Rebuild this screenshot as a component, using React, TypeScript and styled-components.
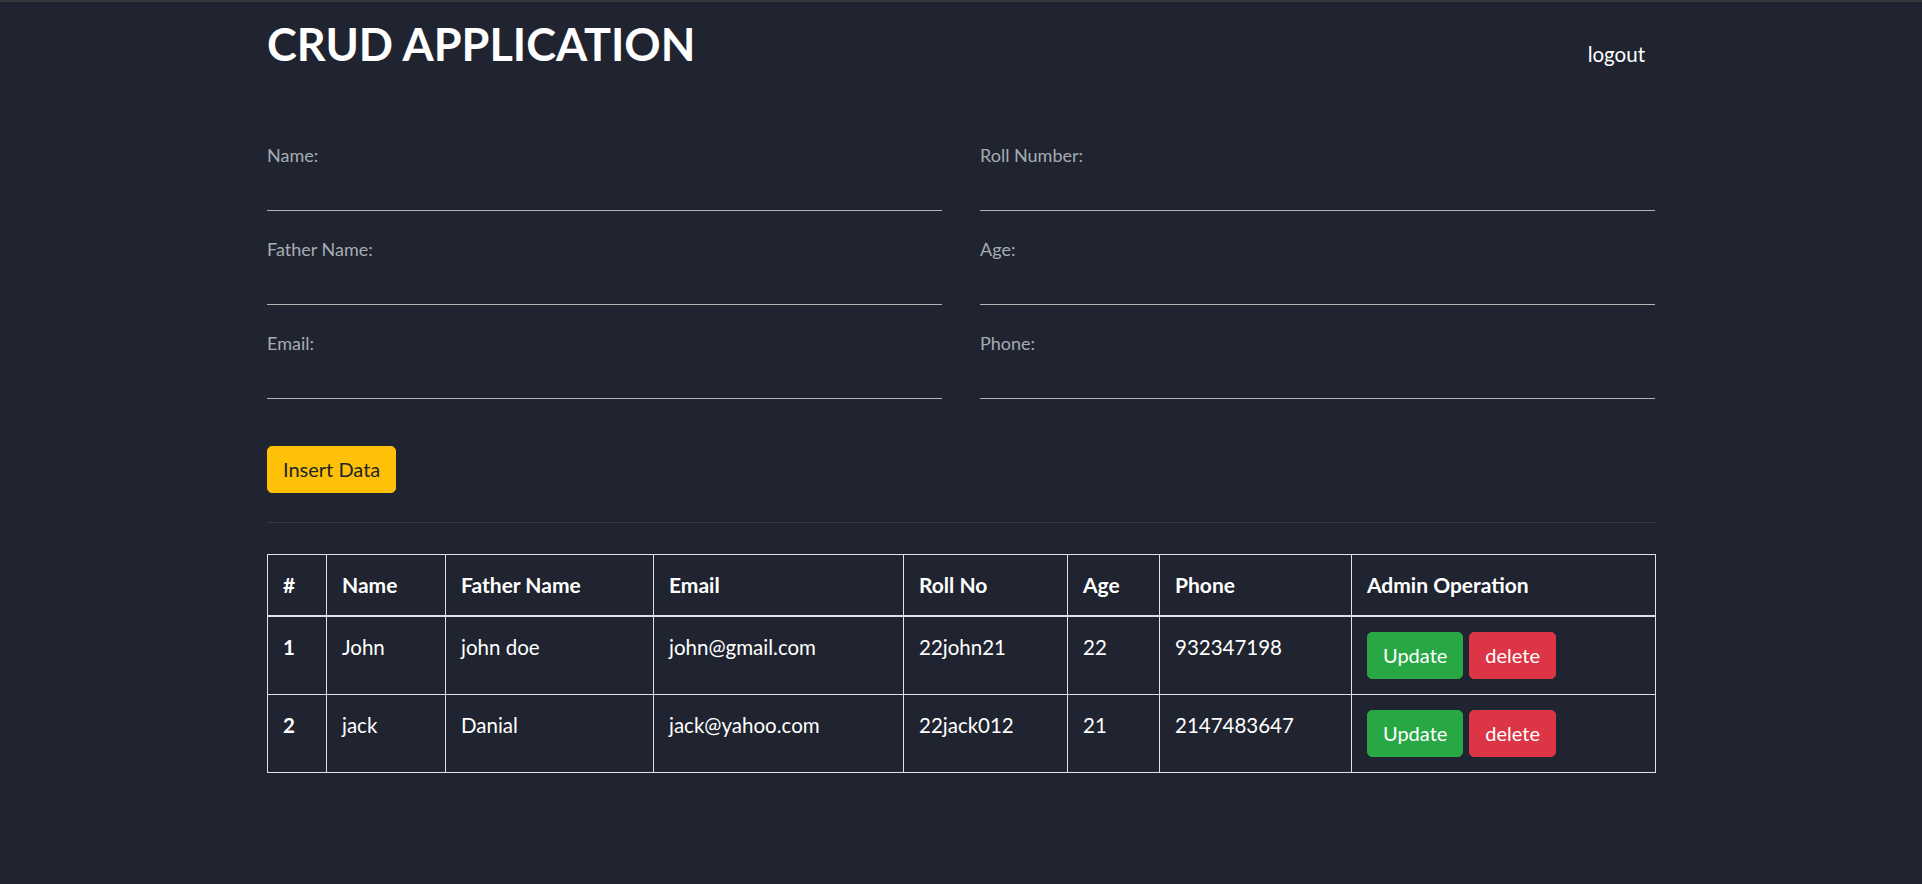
import React from "react";
import styled, { createGlobalStyle } from "styled-components";

const GlobalStyle = createGlobalStyle`
  html, body {
    margin: 0;
    padding: 0;
    background: #1f2430;
  }
  body {
    font-family: Lato, "Noto Sans", sans-serif;
    color: #ffffff;
    border-top: 2px solid #35383d;
  }
  * { box-sizing: border-box; }
`;

const Page = styled.div`
  min-height: 882px;
  background: #1f2430;
`;

const Container = styled.div`
  width: 1388px;
  margin: 0 auto;
`;

const Header = styled.header`
  display: flex;
  justify-content: space-between;
  align-items: flex-start;
  padding-top: 19px;
`;

const Title = styled.h1`
  margin: 0;
  font-family: Lato, sans-serif;
  font-weight: 700;
  font-size: 45px;
  line-height: 46px;
  letter-spacing: 0;
  color: #ffffff;
`;

const LogoutLink = styled.a`
  margin-top: 18px;
  padding: 0 10px;
  font-size: 20.5px;
  line-height: 30px;
  color: #ffffff;
  text-decoration: none;
  cursor: pointer;
`;

const Form = styled.form`
  display: grid;
  grid-template-columns: 1fr 1fr;
  column-gap: 38px;
  row-gap: 25.5px;
  margin-top: 73px;
`;

const Field = styled.div`
  display: flex;
  flex-direction: column;
`;

const Label = styled.label`
  font-size: 18px;
  line-height: 27px;
  margin-bottom: 10px;
  color: #a7acb3;
`;

const Input = styled.input`
  height: 31.5px;
  border: none;
  border-bottom: 1px solid #b4b4b4;
  background: transparent;
  color: #ffffff;
  font-family: inherit;
  font-size: 20px;
  outline: none;
  padding: 0;
`;

const ButtonRow = styled.div`
  margin-top: 47px;
`;

const Btn = styled.button<{ $variant: "warning" | "success" | "danger" }>`
  display: inline-block;
  font-family: Lato, sans-serif;
  font-size: 20px;
  line-height: 30px;
  padding: 7.5px 15px;
  border-radius: 5px;
  border: 1px solid
    ${(p) =>
      p.$variant === "warning" ? "#ffc107" : p.$variant === "success" ? "#28a745" : "#dc3545"};
  background: ${(p) =>
    p.$variant === "warning" ? "#ffc107" : p.$variant === "success" ? "#28a745" : "#dc3545"};
  color: ${(p) => (p.$variant === "warning" ? "#212529" : "#ffffff")};
  cursor: pointer;
  & + & {
    margin-left: 6px;
  }
`;

const Divider = styled.hr`
  margin: 29px 0 31px;
  border: 0;
  border-top: 1px solid rgba(255, 255, 255, 0.1);
`;

const Table = styled.table`
  width: 1388px;
  border-collapse: collapse;
  table-layout: fixed;
  font-size: 20.5px;
  line-height: 30px;
  color: #ffffff;
`;

const Th = styled.th`
  text-align: left;
  vertical-align: bottom;
  font-weight: 700;
  font-size: 21px;
  padding: 15px;
  border: 1px solid #dee2e6;
  border-bottom: 2px solid #dee2e6;
`;

const Td = styled.td<{ $bold?: boolean }>`
  text-align: left;
  vertical-align: top;
  padding: 15px;
  border: 1px solid #dee2e6;
  font-weight: ${(p) => (p.$bold ? 700 : 400)};
`;

const formFields = ["Name:", "Roll Number:", "Father Name:", "Age:", "Email:", "Phone:"];

const columns = [
  { label: "#", w: 59 },
  { label: "Name", w: 119 },
  { label: "Father Name", w: 208 },
  { label: "Email", w: 250 },
  { label: "Roll No", w: 164 },
  { label: "Age", w: 92 },
  { label: "Phone", w: 192 },
  { label: "Admin Operation", w: 304 },
];

const rows = [
  { id: 1, name: "John", father: "john doe", email: "john@gmail.com", roll: "22john21", age: "22", phone: "932347198" },
  { id: 2, name: "jack", father: "Danial", email: "jack@yahoo.com", roll: "22jack012", age: "21", phone: "2147483647" },
];

export default function App() {
  return (
    <Page>
      <GlobalStyle />
      <Container>
        <Header>
          <Title>CRUD APPLICATION</Title>
          <LogoutLink>logout</LogoutLink>
        </Header>
        <Form onSubmit={(e) => e.preventDefault()}>
          {formFields.map((f) => (
            <Field key={f}>
              <Label>{f}</Label>
              <Input type="text" />
            </Field>
          ))}
        </Form>
        <ButtonRow>
          <Btn $variant="warning">Insert Data</Btn>
        </ButtonRow>
        <Divider />
        <Table>
          <colgroup>
            {columns.map((c) => (
              <col key={c.label} style={{ width: c.w }} />
            ))}
          </colgroup>
          <thead>
            <tr>
              {columns.map((c) => (
                <Th key={c.label}>{c.label}</Th>
              ))}
            </tr>
          </thead>
          <tbody>
            {rows.map((r) => (
              <tr key={r.id}>
                <Td $bold>{r.id}</Td>
                <Td>{r.name}</Td>
                <Td>{r.father}</Td>
                <Td>{r.email}</Td>
                <Td>{r.roll}</Td>
                <Td>{r.age}</Td>
                <Td>{r.phone}</Td>
                <Td>
                  <Btn $variant="success">Update</Btn>
                  <Btn $variant="danger">delete</Btn>
                </Td>
              </tr>
            ))}
          </tbody>
        </Table>
      </Container>
    </Page>
  );
}
